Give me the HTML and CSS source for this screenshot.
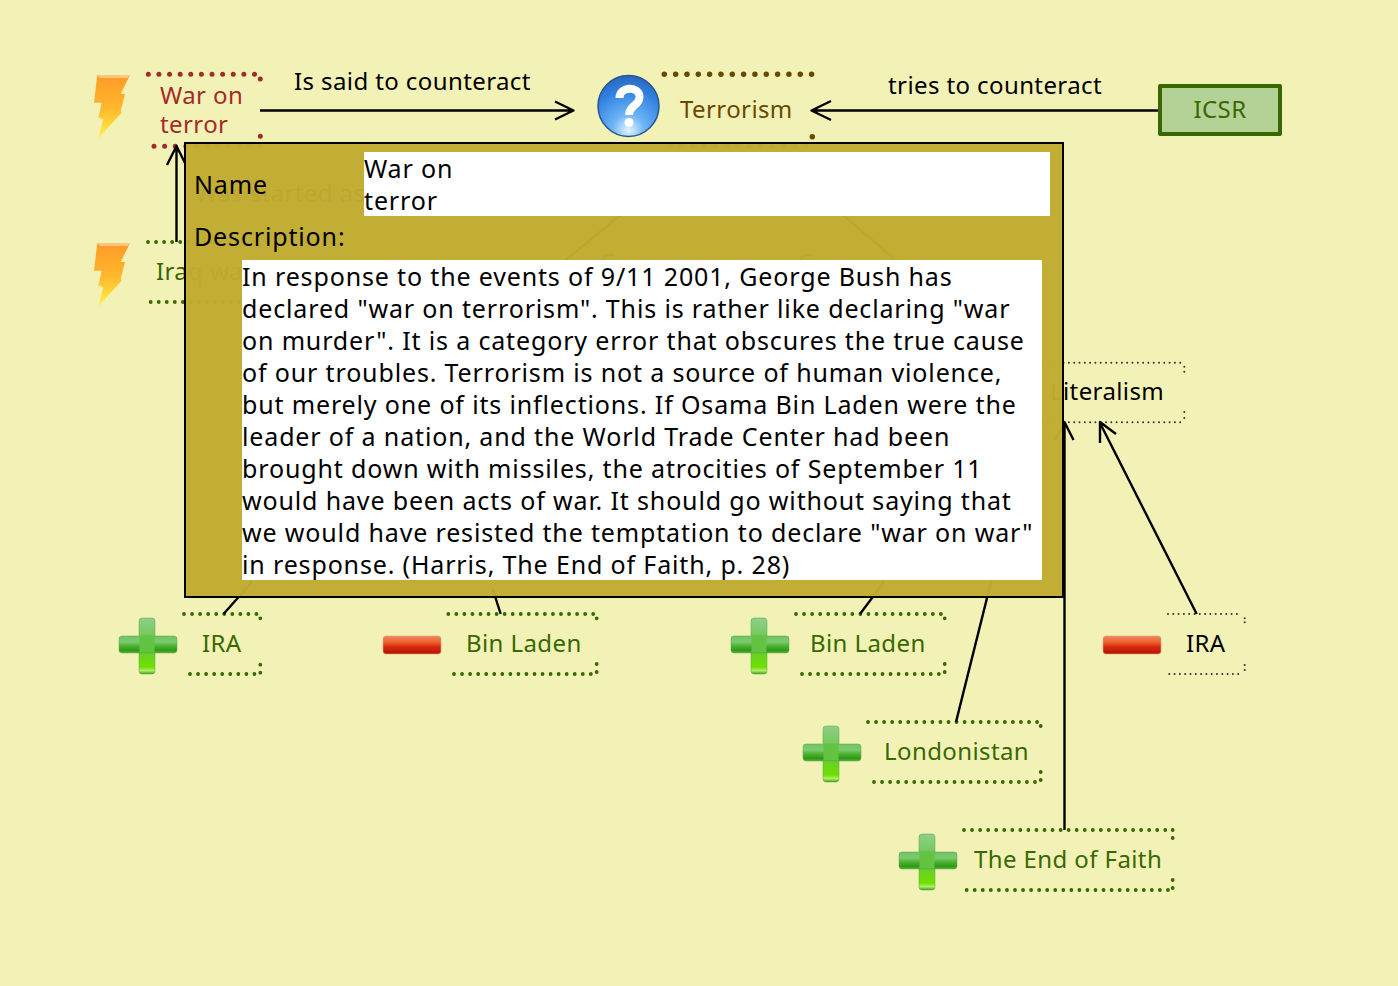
FILE: index.html
```html
<!DOCTYPE html>
<html lang="en">
<head>
<meta charset="utf-8">
<title>Argument map</title>
<link rel="stylesheet" href="styles.css">
</head>
<body>
<main class="canvas">
  <svg class="wires" width="1398" height="986" viewBox="0 0 1398 986" aria-hidden="true">
    <defs>
      <linearGradient id="bolt" x1="0" y1="0" x2="0" y2="1">
        <stop offset="0" stop-color="#ff9a2a"/><stop offset=".5" stop-color="#ffb52a"/><stop offset="1" stop-color="#fff04a"/>
      </linearGradient>
      <radialGradient id="ball" cx=".5" cy=".9" r=".95">
        <stop offset="0" stop-color="#e4f4ff"/><stop offset=".28" stop-color="#6db4f5"/><stop offset=".7" stop-color="#2f80e2"/><stop offset="1" stop-color="#2a62b4"/>
      </radialGradient>
      <linearGradient id="plusH" x1="0" y1="0" x2="0" y2="1">
        <stop offset="0" stop-color="#6fc464"/><stop offset=".35" stop-color="#7ccb6e"/><stop offset=".6" stop-color="#4cb030"/><stop offset=".85" stop-color="#2f9a18"/><stop offset="1" stop-color="#55b040"/>
      </linearGradient>
      <linearGradient id="plusV" x1="0" y1="0" x2="0" y2="1">
        <stop offset="0" stop-color="#8fce8c"/><stop offset=".5" stop-color="#63c83c"/><stop offset=".88" stop-color="#70e000"/><stop offset=".94" stop-color="#b4ec70"/><stop offset="1" stop-color="#3fa010"/>
      </linearGradient>
      <linearGradient id="minus" x1="0" y1="0" x2="0" y2="1">
        <stop offset="0" stop-color="#ee8a68"/><stop offset=".35" stop-color="#f0602a"/><stop offset=".6" stop-color="#d42a10"/><stop offset="1" stop-color="#b81400"/>
      </linearGradient>
      <filter id="soft"><feGaussianBlur stdDeviation=".6"/></filter>
      <symbol id="i-bolt" viewBox="0 0 40 66" overflow="visible">
        <path fill="url(#bolt)" d="M3.300 1H36L26.700 20H31L26.700 37L27.700 38.700L4.300 64.300L9.300 45.300L4.300 43.700L7.700 28.700H0Z"/>
        <path fill="#ffd9a0" opacity=".7" d="M3.300 1H36L34 4H6Z"/>
      </symbol>
      <symbol id="i-plus" viewBox="0 0 60 58">
        <rect x="21" y="1" width="16" height="56" rx="3" fill="url(#plusV)" stroke="#5da84a" stroke-opacity=".5"/>
        <rect x="1" y="19" width="58" height="17" rx="3" fill="url(#plusH)" stroke="#5da84a" stroke-opacity=".5"/>
        <rect x="21.500" y="19.500" width="15" height="16" fill="#62c440"/>
      </symbol>
      <symbol id="i-minus" viewBox="0 0 60 20">
        <rect x="1" y="1" width="58" height="18" rx="3" fill="url(#minus)" stroke="#e89a80" stroke-opacity=".6"/>
      </symbol>
    </defs>

    <g class="dots dots-red">
      <path d="M148.300 74.300H255"/>
      <path d="M154 146.300H262"/>
      <path d="M260.300 79v.01M260.300 136.300v.01"/>
    </g>
    <g class="dots dots-brown">
      <path d="M664.300 74.300H812"/>
      <path d="M812.300 136.700v.01"/>
      <path d="M670 146.300H812"/>
    </g>
    <g class="dots dots-green">
      <path d="M148 242H256"/><path d="M150.700 302H256"/>
      <path d="M260.300 246v.01M260.300 292v.01M260.300 300v.01"/>
      <path d="M184 614H258"/><path d="M190 674H256"/>
      <path d="M260.300 618.300v.01M260.300 664.700v.01M260.300 672.700v.01"/>
      <path d="M448.300 614H594"/><path d="M454 674H592"/>
      <path d="M596.700 618.300v.01M596.700 664v.01M596.700 672v.01"/>
      <path d="M796 614H942"/><path d="M802 674H940"/>
      <path d="M944.700 618.300v.01M944.700 664v.01M944.700 672v.01"/>
      <path d="M868 722H1038"/><path d="M874 782H1037"/>
      <path d="M1040.700 726v.01M1040.700 772v.01M1040.700 780v.01"/>
      <path d="M964 830H1168"/><path d="M966.700 890H1168"/>
      <path d="M1172.700 830v.01M1172.700 838v.01M1172.700 880v.01M1172.700 888v.01"/>
    </g>
    <g class="dots dots-thin">
      <path d="M1168 614H1242"/><path d="M1169.300 674H1242"/>
      <path d="M1244.700 618.300v.01M1244.700 622.300v.01M1244.700 665v.01M1244.700 670v.01"/>
      <path d="M1000 362.700H1182"/><path d="M1000 422.300H1182"/>
      <path d="M1184.300 366.700v.01M1184.300 371.700v.01M1184.300 412v.01M1184.300 418v.01"/>
    </g>

    <g class="links">
      <path d="M260 110.500H572M555 101.500L573.500 110.500L555 119.500"/>
      <path d="M1160 110.500H813M831 101L811.500 110.500L831 120"/>
      <path d="M176.500 242V147M167 165L176.500 146L186 165"/>
      <path d="M223.500 614L252 582"/>
      <path d="M500.700 614L493 590"/>
      <path d="M860 614L884 582"/>
      <path d="M956 722L991 582"/>
      <path d="M1064.500 830V423M1055 440L1064.500 422L1073.500 440"/>
      <path d="M1196.700 614L1100 423M1100 443V422L1116 434"/>
      <path d="M628 209L556 268"/>
      <path d="M836 209L905 268"/>
      <path d="M602 262C604 254 610 254 615 256"/>
      <path d="M800 262C802 254 808 254 813 256"/>
    </g>

    <use href="#i-bolt" x="94" y="73" width="40" height="68" preserveAspectRatio="none" filter="url(#soft)"/>
    <use href="#i-bolt" x="94" y="241" width="40" height="68" preserveAspectRatio="none" filter="url(#soft)"/>

    <g>
      <circle cx="628.500" cy="106" r="30.500" fill="url(#ball)" stroke="#2a5590" stroke-width="1.500"/>
      <path d="M619.500 98C619.500 86 639.500 85.500 639.500 97C639.500 106 629 105 629 115" fill="none" stroke="#fff" stroke-width="8"/>
      <circle cx="629" cy="122.500" r="4.500" fill="#fff"/>
    </g>

    <use href="#i-plus" x="118" y="617" width="60" height="58" filter="url(#soft)"/>
    <use href="#i-minus" x="382" y="635" width="60" height="20" filter="url(#soft)"/>
    <use href="#i-plus" x="730" y="617" width="60" height="58" filter="url(#soft)"/>
    <use href="#i-minus" x="1102" y="635" width="60" height="20" filter="url(#soft)"/>
    <use href="#i-plus" x="802" y="725" width="60" height="58" filter="url(#soft)"/>
    <use href="#i-plus" x="898" y="833" width="60" height="58" filter="url(#soft)"/>
  </svg>

  <div class="label red war">War on<br>terror</div>
  <div class="label link-label said">Is said to counteract</div>
  <div class="label brown terrorism">Terrorism</div>
  <div class="label link-label tries">tries to counteract</div>
  <div class="icsr">ICSR</div>
  <div class="label link-label started">Was started as</div>
  <div class="label green iraq">Iraq war</div>
  <div class="label link-label literalism">Literalism</div>
  <div class="label green ira1">IRA</div>
  <div class="label green bin1">Bin Laden</div>
  <div class="label green bin2">Bin Laden</div>
  <div class="label link-label ira2">IRA</div>
  <div class="label green london">Londonistan</div>
  <div class="label green faith">The End of Faith</div>

  <section class="dialog">
    <div class="name-row">
      <div class="field-label">Name</div>
      <div class="name-box">War on<br>terror</div>
    </div>
    <div class="field-label desc-label">Description:</div>
    <div class="desc-box">In response to the events of 9/11 2001, George Bush has<br>declared "war on terrorism". This is rather like declaring "war<br>on murder". It is a category error that obscures the true cause<br>of our troubles. Terrorism is not a source of human violence,<br>but merely one of its inflections. If Osama Bin Laden were the<br>leader of a nation, and the World Trade Center had been<br>brought down with missiles, the atrocities of September 11<br>would have been acts of war. It should go without saying that<br>we would have resisted the temptation to declare "war on war"<br>in response. (Harris, The End of Faith, p. 28)</div>
  </section>
</main>
</body>
</html>
```

FILE: styles.css
```css
html, body {
  margin: 0;
  padding: 0;
  background: #f3f2b6;
}
.canvas {
  position: relative;
  width: 1398px;
  height: 986px;
  overflow: hidden;
  font-family: "Noto Sans", "DejaVu Sans", sans-serif;
  font-size: 24px;
  letter-spacing: 0.4px;
  color: #000;
}
.wires {
  position: absolute;
  left: 0;
  top: 0;
}
.dots path {
  fill: none;
  stroke-linecap: round;
}
.dots-red path { stroke: #a32a2a; stroke-width: 5; stroke-dasharray: 0 10.62; }
.dots-brown path { stroke: #664a00; stroke-width: 5.5; stroke-dasharray: 0 11.33; }
.dots-green path { stroke: #386800; stroke-width: 3.8; stroke-dasharray: 0 8.05; }
.dots-thin path { stroke: #333; stroke-width: 2; stroke-dasharray: 0 5.3; }
.links path {
  fill: none;
  stroke: #000;
  stroke-width: 2.4;
  stroke-linejoin: round;
}
.label {
  position: absolute;
  line-height: 29px;
  white-space: nowrap;
}
.red { color: #a32a2a; }
.brown { color: #664a00; }
.green { color: #386800; }
.link-label { color: #000; }
.war { left: 160px; top: 80px; }
.said { left: 294px; top: 66px; }
.terrorism { left: 680px; top: 94px; }
.tries { left: 888px; top: 70px; }
.started { left: 195px; top: 178px; }
.iraq { left: 156px; top: 256px; }
.literalism { left: 1050px; top: 376px; }
.ira1 { left: 202px; top: 628px; }
.bin1 { left: 466px; top: 628px; }
.bin2 { left: 810px; top: 628px; }
.ira2 { left: 1186px; top: 628px; }
.london { left: 884px; top: 736px; }
.faith { left: 974px; top: 844px; }
.icsr {
  position: absolute;
  left: 1158px;
  top: 84px;
  box-sizing: border-box;
  width: 124px;
  height: 52px;
  padding-bottom: 4px;
  display: flex;
  align-items: center;
  justify-content: center;
  border: 4px solid #386800;
  border-radius: 2px;
  background: #b4d295;
  color: #386800;
}
.dialog {
  position: absolute;
  left: 184px;
  top: 142px;
  box-sizing: border-box;
  width: 880px;
  height: 456px;
  border: 2px solid #000;
  background: rgba(193, 171, 50, 0.975);
  padding: 8px 12px 0 9px;
  font-size: 25px;
  letter-spacing: 0.85px;
  line-height: 32px;
}
.name-row {
  display: flex;
  align-items: center;
}
.field-label {
  width: 169px;
  flex: none;
  margin-left: -1px;
  margin-right: 1px;
}
.name-box {
  flex: 1;
  background: #fff;
  height: 64px;
}
.desc-label {
  width: auto;
  margin-top: 4px;
}
.desc-box {
  box-sizing: border-box;
  margin: 8px 0 0 47px;
  width: 800px;
  height: 320px;
  background: #fff;
  white-space: nowrap;
}
```
